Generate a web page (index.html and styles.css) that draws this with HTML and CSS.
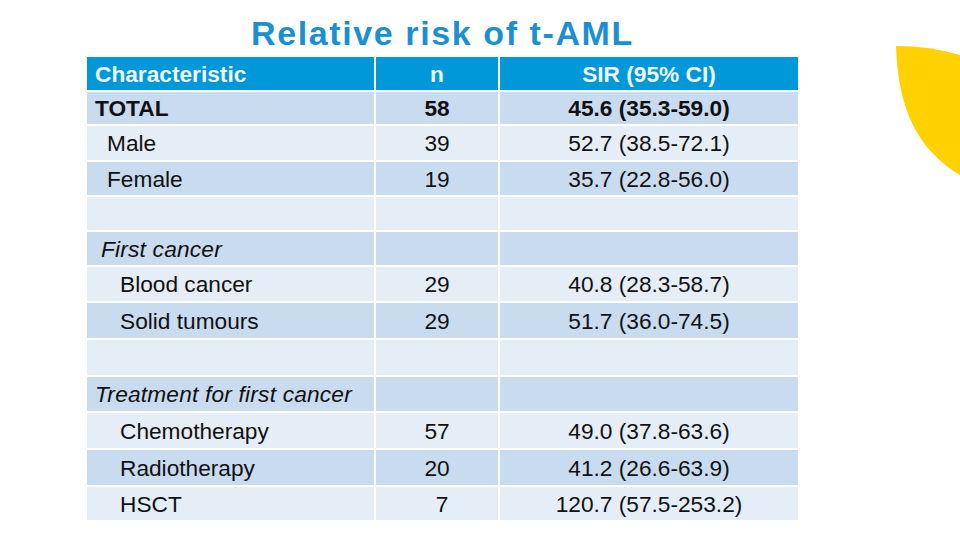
FILE: index.html
```html
<!DOCTYPE html>
<html lang="en">
<head>
<meta charset="utf-8">
<title>Relative risk of t-AML</title>
<link rel="stylesheet" href="styles.css">
</head>
<body>
<div class="slide">
  <svg class="leaf" width="64" height="140" viewBox="896 40 64 140" aria-hidden="true">
    <path d="M896 46 Q930 46 960 55 L960 175 C918 150 898 110 896 46 Z" fill="#ffd100"/>
  </svg>
  <div class="content">
    <h1 class="title">Relative risk of t-AML</h1>
    <table class="risk">
      <colgroup>
        <col class="c-char">
        <col class="c-n">
        <col class="c-sir">
      </colgroup>
      <thead>
        <tr class="head h33">
          <th class="lbl">Characteristic</th>
          <th>n</th>
          <th>SIR (95% CI)</th>
        </tr>
      </thead>
      <tbody>
        <tr class="dark h32 bold">
          <td class="lbl">TOTAL</td><td>58</td><td>45.6 (35.3-59.0)</td>
        </tr>
        <tr class="light h34">
          <td class="lbl ind1">Male</td><td>39</td><td>52.7 (38.5-72.1)</td>
        </tr>
        <tr class="dark h33">
          <td class="lbl ind1">Female</td><td>19</td><td>35.7 (22.8-56.0)</td>
        </tr>
        <tr class="light h33">
          <td></td><td></td><td></td>
        </tr>
        <tr class="dark h33">
          <td class="lbl ind0 it">First cancer</td><td></td><td></td>
        </tr>
        <tr class="light h34">
          <td class="lbl ind2">Blood cancer</td><td>29</td><td>40.8 (28.3-58.7)</td>
        </tr>
        <tr class="dark h35">
          <td class="lbl ind2">Solid tumours</td><td>29</td><td>51.7 (36.0-74.5)</td>
        </tr>
        <tr class="light h35">
          <td></td><td></td><td></td>
        </tr>
        <tr class="dark h34">
          <td class="lbl it">Treatment for first cancer</td><td></td><td></td>
        </tr>
        <tr class="light h35">
          <td class="lbl ind2">Chemotherapy</td><td>57</td><td>49.0 (37.8-63.6)</td>
        </tr>
        <tr class="dark h35">
          <td class="lbl ind2">Radiotherapy</td><td>20</td><td>41.2 (26.6-63.9)</td>
        </tr>
        <tr class="light h33">
          <td class="lbl ind2">HSCT</td><td class="shift">7</td><td>120.7 (57.5-253.2)</td>
        </tr>
      </tbody>
    </table>
  </div>
</div>
</body>
</html>
```

FILE: styles.css
```css
html, body {
  margin: 0;
  padding: 0;
  background: #ffffff;
}

.slide {
  position: relative;
  width: 960px;
  height: 540px;
  overflow: hidden;
  background: #ffffff;
  font-family: "Liberation Sans", Arial, sans-serif;
  color: #111111;
}

.leaf {
  position: absolute;
  left: 896px;
  top: 40px;
}

.content {
  margin-left: 85px;
  width: 715px;
  padding-top: 13px;
}

.title {
  margin: 0 0 2px 0;
  font-size: 34px;
  line-height: 40px;
  font-weight: bold;
  letter-spacing: 1.6px;
  color: #1b8fd2;
  text-align: center;
}

.risk {
  border-collapse: separate;
  border-spacing: 2px;
  table-layout: fixed;
  width: 715px;
  font-size: 22.7px;
}

.c-char { width: 287px; }
.c-n { width: 122px; }
.c-sir { width: 298px; }

.risk th,
.risk td {
  padding: 0;
  text-align: center;
  vertical-align: middle;
  white-space: nowrap;
  line-height: 26px;
}

.risk .lbl {
  text-align: left;
  padding-left: 8px;
}

.risk .ind0 { padding-left: 14px; }
.risk .ind1 { padding-left: 20px; }
.risk .ind2 { padding-left: 33px; }

.risk .shift { padding-left: 10px; }

.it {
  font-style: italic;
  letter-spacing: 0.2px;
}

.head th {
  background: #0098d8;
  color: #eef7fc;
  font-weight: bold;
}

.dark td { background: #c9dbef; }
.light td { background: #e5edf7; }

.bold td { font-weight: bold; }

.h32 { height: 32px; }
.h33 { height: 33px; }
.h34 { height: 34px; }
.h35 { height: 35px; }
```
